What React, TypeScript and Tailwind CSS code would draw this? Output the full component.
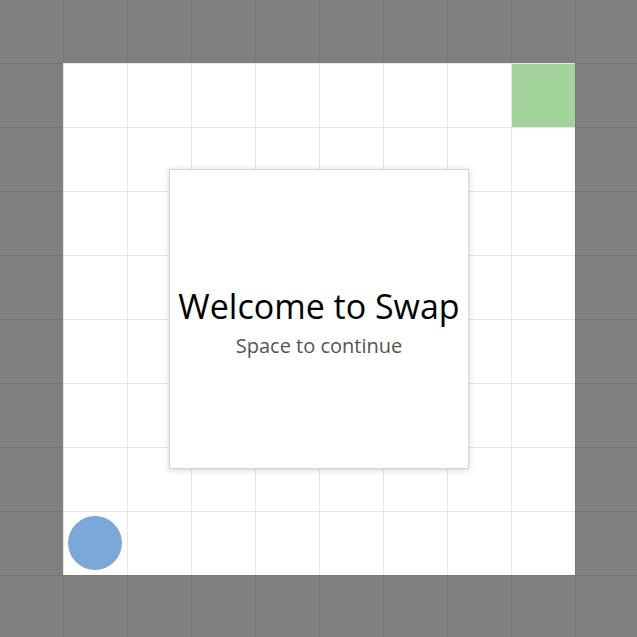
const SIZE = 10;

const cells = Array.from({ length: SIZE * SIZE }, (_, i) => {
    const row = Math.floor(i / SIZE);
    const col = i % SIZE;
    const wall = row === 0 || col === 0 || row === SIZE - 1 || col === SIZE - 1;
    const goal = row === 1 && col === SIZE - 2;
    const player = row === SIZE - 2 && col === 1;
    return { wall, goal, player };
});

export default function App() {
    return (
        <main className="w-[637px] h-[637px] overflow-hidden bg-[#808080]" style={{ fontFamily: "'Open Sans', sans-serif" }}>
            <div className="relative -ml-px -mt-px w-[640px] h-[640px]">
                <div className="grid grid-cols-[repeat(10,64px)] grid-rows-[repeat(10,64px)]">
                    {cells.map((cell, i) => (
                        <div
                            key={i}
                            className={
                                cell.wall
                                    ? "bg-[#808080] border-l border-t border-[#777777]"
                                    : cell.goal
                                    ? "bg-[#a2d39b] border-l border-t border-[#e6e6e6]"
                                    : "bg-white border-l border-t border-[#e6e6e6] flex items-center justify-center"
                            }
                        >
                            {cell.player && <div className="w-[54px] h-[54px] mr-[2px] mb-[2px] rounded-full bg-[#7ca8d9]" />}
                        </div>
                    ))}
                </div>

                {/* welcome overlay */}
                <div className="absolute left-1/2 top-1/2 -translate-x-1/2 -translate-y-1/2 w-[300px] h-[300px] bg-white border border-[#d6d6d6] shadow-[0_1px_6px_rgba(0,0,0,0.18)] flex flex-col items-center justify-center">
                    <h1 className="mt-[4px] text-[34px] leading-[46px] text-black">Welcome to Swap</h1>
                    <p className="mt-[3px] text-[20px] leading-[27px] text-[#555555]">Space to continue</p>
                </div>
            </div>
        </main>
    );
}
